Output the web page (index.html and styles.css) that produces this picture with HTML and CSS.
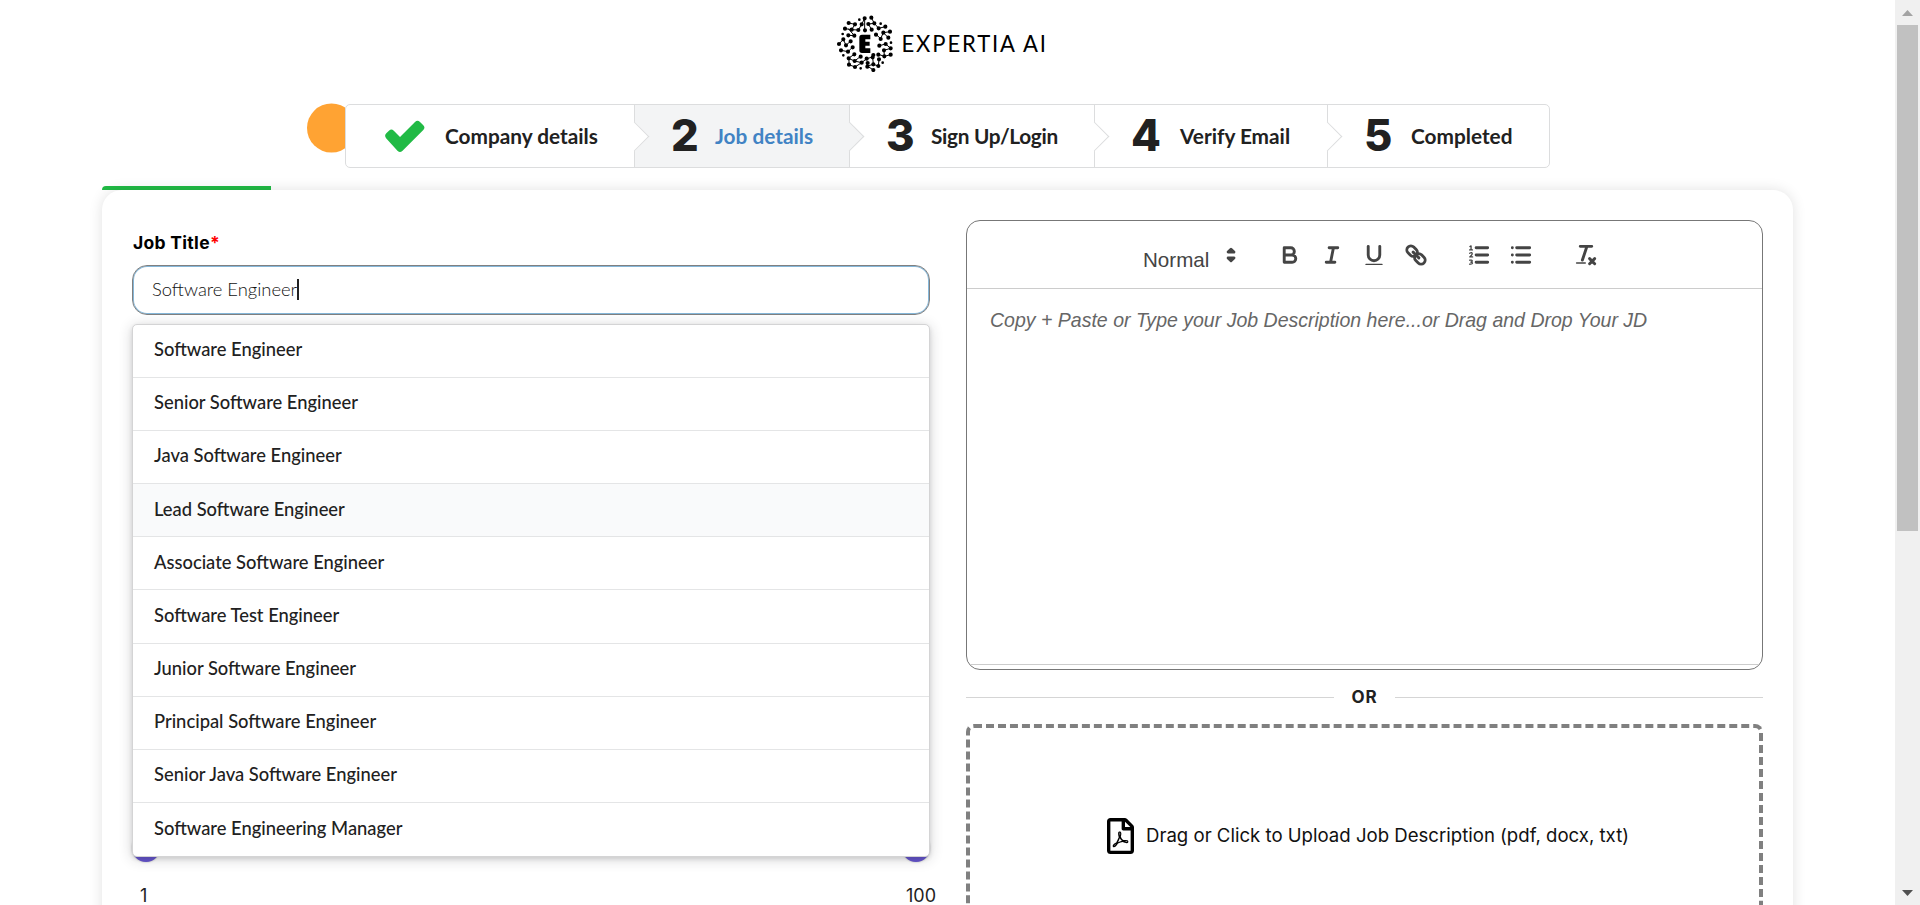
FILE: index.html
```html
<!DOCTYPE html>
<html lang="en">
<head>
<meta charset="utf-8">
<title>Expertia AI - Job details</title>
<link rel="stylesheet" href="styles.css">
</head>
<body>
<div class="viewport">
  <main class="page">
    <header class="brand">
      <svg class="brand-mark" viewBox="45 39 174 174" width="58" height="58">
        <g stroke="#000" stroke-width="3" fill="none">
          <path d="M86 66L105 70L95 86L75 83M134 52L125 70L115 87L95 86M154 50L163 67L145 69L155 86M134 52L134 88M163 67L176 82L196 77M210 92L190 95L182 113L168 100M190 95L205 110M85 83L103 104L85 103M57 129L70 115L78 133L92 120M63 148L84 152L98 138M178 134L197 129L212 142L192 148M212 161L193 166L192 148M175 160L193 166M103 160L85 172L104 180L122 166M87 172L87 191L105 198L125 185L104 180M140 173L158 168L160 190L142 195L160 207M125 185L140 173M177 175L175 195L160 190"/>
        </g>
        <g stroke="#000" stroke-width="12.500" stroke-linecap="round" fill="none">
          <path d="M86 66h0M105 70h0M134 52h0M154 50h0M125 70h0M145 69h0M163 67h0M196 77h0M176 82h0M75 83h0M95 86h0M115 87h0M135 88h0M155 86h0M210 92h0M190 95h0M168 101h0M85 103h0M103 104h0M205 110h0M182 114h0M70 115h0M92 121h0M57 129h0M78 133h0M197 129h0M178 134h0M212 142h0M63 148h0M84 152h0M98 139h0M192 148h0M212 161h0M193 166h0M175 161h0M160 162h0M103 160h0M122 167h0M86 172h0M104 180h0M140 173h0M158 169h0M125 185h0M143 186h0M160 190h0M177 175h0M87 191h0M105 198h0M142 197h0M160 207h0M175 195h0"/>
        </g>
        <g stroke="#000" stroke-width="8" stroke-linecap="round">
          <path d="M118 56h0M182 68h0M68 99h0M213 125h0M70 163h0M188 185h0M122 202h0"/>
        </g>
        <path d="M126 101H151V115H136V122H149V134H136V142H151V156H126Q118 156 118 148V109Q118 101 126 101Z"/>
      </svg>
      <svg class="brand-name" viewBox="0 0 146 30" width="146" height="30">
        <text transform="translate(-.5 23) scale(.92 1)" textLength="157" lengthAdjust="spacing">EXPERTIA AI</text>
      </svg>
    </header>

    <nav class="steps">
      <span class="click-dot"></span>
      <div class="step step-1">
        <svg class="check" viewBox="0 0 41 32" width="41" height="32"><path d="M2.300 13.200L5.200 10.400Q7.500 8.400 9.800 10.700L16 17L31 1.900Q33.500-.4 36 1.900L39.300 5.200Q41.600 7.600 39.300 10L18.300 31Q16 33 13.700 31L2.300 18.400Q-.1 15.800 2.300 13.200Z" fill="#21ba45"/></svg>
        <span class="label">Company details</span>
      </div>
      <div class="step step-2 active"><b>2</b><span class="label">Job details</span></div>
      <div class="step step-3"><b>3</b><span class="label">Sign Up/Login</span></div>
      <div class="step step-4"><b>4</b><span class="label">Verify Email</span></div>
      <div class="step step-5"><b>5</b><span class="label">Completed</span></div>
    </nav>

    <div class="progress"><div class="progress-bar"></div></div>

    <section class="card">
      <div class="col">
        <div class="field">
          <label class="field-label">Job Title<span class="req">*</span></label>
          <div class="input"><span class="value">Software Engineer</span><i class="caret"></i></div>
          <ul class="menu">
            <li>Software Engineer</li>
            <li>Senior Software Engineer</li>
            <li>Java Software Engineer</li>
            <li class="hover">Lead Software Engineer</li>
            <li>Associate Software Engineer</li>
            <li>Software Test Engineer</li>
            <li>Junior Software Engineer</li>
            <li>Principal Software Engineer</li>
            <li>Senior Java Software Engineer</li>
            <li>Software Engineering Manager</li>
          </ul>
        </div>
        <div class="range">
          <div class="handles"><i class="handle"></i><i class="handle"></i></div>
          <div class="range-labels"><span>1</span><span>100</span></div>
        </div>
      </div>

      <div class="col">
        <div class="editor">
          <div class="toolbar">
            <div class="picker">Normal</div>
            <svg class="tool picker-arrows" viewBox="0 0 18 18"><path class="solid" d="M7 11L9 13L11 11ZM7 7L9 5L11 7Z"/></svg>
            <div class="tools">
              <svg class="tool" viewBox="0 0 18 18"><path d="M5 4H9.500A2.500 2.500 0 0 1 12 6.500A2.500 2.500 0 0 1 9.500 9H5ZM5 9H10.500A2.500 2.500 0 0 1 13 11.500A2.500 2.500 0 0 1 10.500 14H5Z"/></svg>
              <svg class="tool" viewBox="0 0 18 18"><path d="M7 4H13M5 14H11M8 14L10 4"/></svg>
              <svg class="tool" viewBox="0 0 18 18"><path d="M5 3V9A4.012 4.012 0 0 0 9 13A4.012 4.012 0 0 0 13 9V3"/><rect class="plain" x="3" y="15" width="12" height="1" rx=".5"/></svg>
              <svg class="tool" viewBox="0 0 18 18"><g transform="rotate(45 9 9)"><rect x="1.200" y="6.200" width="8" height="5.600" rx="2.800"/><rect x="8.800" y="6.200" width="8" height="5.600" rx="2.800"/><path d="M6.200 9H11.800"/></g></svg>
            </div>
            <div class="tools lists">
              <svg class="tool" viewBox="0 0 18 18"><path d="M7 4H15M7 9H15M7 14H15"/><path class="thin" d="M2.500 5.500H4.500M3.500 5.500V2.700L2.700 3.100M2.500 7.800Q4.300 6.900 4.300 8.100Q4.300 8.900 2.600 10.300H4.600M2.500 12.600H3.700Q4.400 12.700 4.300 13.300Q4.200 13.900 3.300 13.900Q4.500 13.900 4.500 14.700Q4.400 15.500 2.500 15.300"/></svg>
              <svg class="tool" viewBox="0 0 18 18"><path d="M6 4H15M6 9H15M6 14H15M3 4H3.010M3 9H3.010M3 14H3.010"/></svg>
            </div>
            <div class="tools clean">
              <svg class="tool" viewBox="0 0 18 18"><path d="M5 3H13M6.500 12.500L9.500 3.500M11.500 11.500L15 15M15 11.500L11.500 15"/><rect class="plain" x="2" y="14" width="7" height="1" rx=".5"/></svg>
            </div>
          </div>
          <div class="editor-body">Copy + Paste or Type your Job Description here...or Drag and Drop Your JD</div>
        </div>
        <div class="or"><span>OR</span></div>
        <div class="drop">
          <svg viewBox="0 0 384 512" width="27" height="36"><path fill-rule="evenodd" d="M369.900 97.900L286 14C277 5 264.800 0 252.100 0H48C21.500 0 0 21.500 0 48v416c0 26.500 21.500 48 48 48h288c26.500 0 48-21.500 48-48V131.900c0-12.700-5.100-25-14.100-34zM332.100 128H256V51.900l76.100 76.100zM48 464V48h160v104c0 13.300 10.700 24 24 24h104v288H48zm250.200-143.700c-12.200-12-47-8.700-64.400-6.500-17.200-10.500-28.700-25-36.800-46.300 3.900-16.100 10.100-40.600 5.400-56-4.200-26.200-37.800-23.600-42.600-5.900-4.400 16.100-.4 38.500 7 67.100-10 23.900-24.900 56-35.400 74.400-20 10.300-47 26.200-51 46.200-3.300 15.800 26 55.200 76.100-31.200 22.400-7.400 46.800-16.500 68.400-20.100 18.900 10.200 41 17 55.800 17 25.500 0 28-28.200 17.500-38.700zm-198.100 77.800c5.100-13.700 24.500-29.500 30.400-35-19 30.300-30.400 35.700-30.400 35zm81.600-190.600c7.400 0 6.700 32.100 1.800 40.800-4.400-13.900-4.300-40.800-1.800-40.800zm-24.400 136.600c9.700-16.900 18-37 24.700-54.700 8.300 15.100 18.900 27.200 30.100 35.500-20.800 4.300-38.900 13.100-54.800 19.200zm131.600-5s-5 6-37.300-7.800c35.100-2.600 40.900 5.400 37.300 7.800z"/></svg>
          <span>Drag or Click to Upload Job Description (pdf, docx, txt)</span>
        </div>
      </div>
    </section>
  </main>
  <aside class="scrollbar">
    <i class="arrow up"></i>
    <i class="thumb"></i>
    <i class="arrow down"></i>
  </aside>
</div>
</body>
</html>
```
FILE: styles.css
```css
* { box-sizing: border-box; }
body { margin: 0; overflow: hidden; background: #fff; font-family: Lato, "Liberation Sans", sans-serif; color: #212121; }
.viewport { display: flex; height: 905px; overflow: hidden; }
.page { flex: 1; height: 905px; overflow: hidden; }

.brand { display: flex; align-items: flex-start; padding: 14px 0 0 835px; height: 104px; gap: 9px; }
.brand-name { margin-top: 15px; overflow: visible; }
.brand-name text { font: 400 24px Lato, sans-serif; fill: #000; }

.steps { position: relative; display: flex; width: 1205px; height: 64px; margin-left: 345px; border: 1px solid #dcddde; border-radius: 5px; background: #fff; }
.click-dot { position: absolute; left: -39px; top: -2px; width: 38px; height: 50px; background: #ffa333; clip-path: circle(24.500px at 24.500px 25px); }
.step { position: relative; display: flex; align-items: center; border-right: 1px solid #dcddde; padding-left: 36px; font-size: 20.800px; font-weight: 700; white-space: nowrap; }
.step .label { padding-bottom: 1px; }
.step:last-child { border-right: 0; }
.step:not(:last-child)::after { content: ""; position: absolute; z-index: 2; right: -11px; top: 21px; width: 20px; height: 20px; background: #fff; border: solid #dcddde; border-width: 1px 1px 0 0; transform: rotate(45deg); }
.step b { width: 28px; margin-right: 16px; font: 800 43.500px/60px Inter, sans-serif; margin-top: -3px; }
.step-1 { width: 289px; padding-left: 38px; }
.step-1 .check { margin-right: 20px; }
.step-2 { width: 215px; }
.step-3 { width: 245px; }
.step-3 b { margin-right: 17px; }
.step-3 .label { letter-spacing: -.3px; }
.step-4 { width: 233px; }
.step-4 b { margin-right: 21px; }
.step-5 { flex: 1; }
.step-5 b { margin-right: 19px; }
.step.active { background: #f3f4f5; }
.step.active .label { color: #4183c4; }
.step.active::after { background: #f3f4f5; }

.progress { height: 22px; padding: 18px 0 0 102px; }
.progress-bar { width: 169px; height: 4px; background: #21ba45; border-radius: 4px 0 0 0; }

.card { display: grid; grid-template-columns: 798px 797px; gap: 36px; width: 1691px; height: 900px; margin-left: 102px; padding: 30px 30px 0; border-radius: 20px 20px 0 0; background: #fff; box-shadow: 0 0 14px rgba(0,0,0,.12); }
.field { position: relative; height: 636px; padding-top: 11px; }
.field-label { display: block; height: 34px; padding-left: 1px; font: 700 17.500px/24px Inter, sans-serif; letter-spacing: .3px; color: #000; }
.req { color: #f00; }
.input { display: flex; align-items: center; height: 50px; padding: 0 0 2px 19px; border: 1px solid #808080; border-radius: 15px; box-shadow: inset 0 0 0 1px #85b7d9; font-size: 18.400px; font-weight: 300; color: #111; }
.caret { width: 2px; height: 21px; background: #222; }
.menu { position: absolute; z-index: 3; left: 0; top: 104px; width: 798px; height: 533px; margin: 0; padding: 0; list-style: none; display: grid; grid-template-rows: repeat(10, 1fr); background: #fff; border: 1px solid #d4d4d5; border-radius: 5px; box-shadow: 0 2px 4px rgba(34,36,38,.12), 0 2px 14px rgba(34,36,38,.2); overflow: hidden; }
.menu li { display: flex; align-items: center; padding: 0 0 3.500px 21px; border-bottom: 1px solid #e4e5e6; font-size: 18.350px; font-weight: 500; }
.menu li:last-child { border-bottom: 0; }
.menu .hover { background: #f9fafb; }
.handles { display: flex; justify-content: space-between; height: 28px; margin: -22px 0 0 0; }
.handle { width: 28px; height: 28px; border-radius: 50%; background: #6554d0; box-shadow: 0 0 2px rgba(0,0,0,.3); }
.range-labels { display: flex; justify-content: space-between; padding: 23px 0 0 8px; margin-right: -6px; font: 400 18px/22px Inter, sans-serif; color: #222; }

.editor { display: flex; flex-direction: column; height: 450px; padding-bottom: 4px; border: 1px solid #777; border-radius: 14px; font-family: "Liberation Sans", sans-serif; overflow: hidden; }
.toolbar { display: flex; align-items: flex-start; height: 68px; padding: 21px 0 0 176px; border-bottom: 1px solid #ccc; }
.picker { width: 75px; padding-top: 6px; font-size: 20.600px; line-height: 24px; color: #444; }
.tool { width: 26px; height: 26px; fill: none; stroke: #444; stroke-width: 2; stroke-linecap: round; stroke-linejoin: round; }
.tool .solid { fill: #444; stroke-width: 2; }
.tool .plain { fill: #444; stroke: none; }
.tool .thin { stroke-width: .9; }
.tools { display: flex; gap: 16px; margin-left: 40px; }
.tools.lists { margin-left: 37px; }
.tools.clean { margin-left: 39px; }
.picker-arrows { margin: 0 -7px 0 0; }
.editor-body { flex: 1; padding: 19px 23px; border-bottom: 1px solid #ccc; font-size: 19.520px; line-height: 24px; font-style: italic; color: #666; }
.or { display: flex; align-items: center; gap: 18px; height: 54px; font: 700 17px Inter, sans-serif; letter-spacing: .8px; }
.or::before, .or::after { content: ""; flex: 1; height: 1px; background: #d5d5d5; }
.drop { display: flex; align-items: center; justify-content: center; gap: 12px; height: 224px; padding-left: 7px; border: 4px dashed #808080; border-radius: 8px; font: 400 18.600px Inter, sans-serif; color: #111; }
.drop span { padding-bottom: 2px; }

.scrollbar { display: flex; flex-direction: column; align-items: center; width: 25px; background: #f0f0f0; padding: 10px 2px 9px 2px; }
.thumb { width: 21px; height: 506px; margin-top: 9px; background: #c1c1c1; }
.arrow { width: 11px; height: 6px; background: #a3a3a3; clip-path: polygon(50% 0, 100% 100%, 0 100%); }
.arrow.down { margin-top: auto; background: #505050; clip-path: polygon(0 0, 100% 0, 50% 100%); }
```
